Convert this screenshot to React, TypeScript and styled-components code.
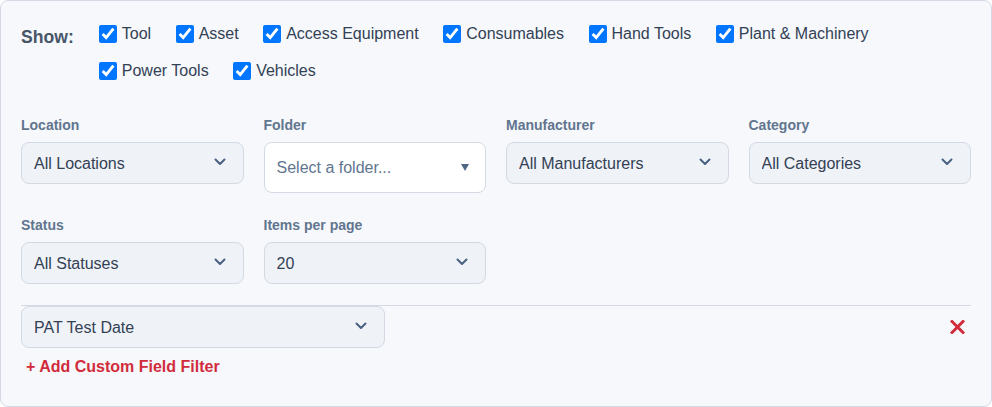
import { FC } from 'react';
import styled, { createGlobalStyle } from 'styled-components';

const slate700 = '#334155';
const slate600 = '#475569';
const slate500 = '#61758f';
const border = '#d3dae3';
const red = '#d12c3c';

const GlobalStyle = createGlobalStyle`
	html, body {
		margin: 0;
		padding: 0;
		background: #ffffff;
	}
	body {
		font-family: 'Liberation Sans', Arial, sans-serif;
	}
	* {
		box-sizing: border-box;
	}
`;

const Panel = styled.div`
	width: 992px;
	height: 407px;
	padding: 20px;
	background: #f6f8fb;
	border: 1px solid ${border};
	border-radius: 8px;
`;

const ShowRow = styled.div`
	display: flex;
	align-items: flex-start;
	gap: 25px;
	margin-bottom: 31px;
`;

const ShowLabel = styled.span`
	font-size: 17.6px;
	font-weight: 700;
	line-height: 26px;
	margin-top: 3px;
	color: ${slate600};
	white-space: nowrap;
`;

const TypeList = styled.div`
	flex: 1;
	display: flex;
	flex-wrap: wrap;
	column-gap: 24.5px;
	row-gap: 11px;
`;

const TypeOption = styled.label`
	display: flex;
	align-items: center;
	gap: 5px;
	height: 26px;
	font-size: 16px;
	color: ${slate700};
	cursor: pointer;
	white-space: nowrap;

	input {
		width: 18px;
		height: 18px;
		margin: 0;
	}
`;

const FilterGrid = styled.div`
	display: grid;
	grid-template-columns: repeat(4, 1fr);
	column-gap: 20px;
	row-gap: 22px;
	align-items: start;
`;

const Field = styled.div`
	display: flex;
	flex-direction: column;
`;

const FieldLabel = styled.label`
	font-size: 14px;
	font-weight: 700;
	line-height: 20px;
	margin-bottom: 7px;
	color: ${slate500};
`;

const SelectWrap = styled.div<{ $width?: number }>`
	position: relative;
	width: ${({ $width }) => ($width ? `${$width}px` : '100%')};
`;

const Select = styled.select`
	appearance: none;
	width: 100%;
	height: 42px;
	padding: 0 40px 0 12px;
	font-family: inherit;
	font-size: 16px;
	color: ${slate700};
	background: #eff2f7;
	border: 1px solid ${border};
	border-radius: 8px;
	outline: none;
`;

const Chevron = styled.svg`
	position: absolute;
	right: 18px;
	top: 50%;
	margin-top: -5px;
	pointer-events: none;
`;

const FolderPicker = styled.button`
	display: flex;
	align-items: center;
	justify-content: space-between;
	width: 100%;
	height: 51px;
	padding: 0 16px 0 12px;
	font-family: inherit;
	font-size: 16px;
	color: ${slate500};
	background: #ffffff;
	border: 1px solid ${border};
	border-radius: 8px;
	text-align: left;
	cursor: pointer;
`;

const Caret = styled.span`
	width: 0;
	height: 0;
	border-left: 4px solid transparent;
	border-right: 4px solid transparent;
	border-top: 7px solid #4f6785;
`;

const Divider = styled.hr`
	margin: 21px 0 0;
	border: none;
	border-top: 1px solid ${border};
`;

const CustomRow = styled.div`
	display: flex;
	align-items: center;
	justify-content: space-between;
`;

const RemoveButton = styled.button`
	display: flex;
	align-items: center;
	justify-content: center;
	width: 28px;
	height: 28px;
	padding: 0;
	background: none;
	border: none;
	cursor: pointer;
`;

const AddButton = styled.button`
	margin-top: 5px;
	padding: 4px 5px;
	font-family: inherit;
	font-size: 16px;
	font-weight: 700;
	line-height: 20px;
	color: ${red};
	background: none;
	border: none;
	cursor: pointer;
`;

const ChevronIcon: FC = () => (
	<Chevron width="12" height="8" viewBox="0 0 12 8" fill="none">
		<path d="M1.5 1.5 6 6l4.5-4.5" stroke="#4a6282" strokeWidth="2" strokeLinecap="round" strokeLinejoin="round" />
	</Chevron>
);

type DropdownProps = { options: string[]; width?: number };

const Dropdown: FC<DropdownProps> = ({ options, width }) => (
	<SelectWrap $width={width}>
		<Select defaultValue={options[0]}>
			{options.map((o) => (
				<option key={o}>{o}</option>
			))}
		</Select>
		<ChevronIcon />
	</SelectWrap>
);

const assetTypes = [
	'Tool',
	'Asset',
	'Access Equipment',
	'Consumables',
	'Hand Tools',
	'Plant & Machinery',
	'Power Tools',
	'Vehicles',
];

export default function App() {
	return (
		<>
			<GlobalStyle />
			<Panel>
				<ShowRow>
					<ShowLabel>Show:</ShowLabel>
					<TypeList>
						{assetTypes.map((t) => (
							<TypeOption key={t}>
								<input type="checkbox" defaultChecked />
								{t}
							</TypeOption>
						))}
					</TypeList>
				</ShowRow>

				<FilterGrid>
					<Field>
						<FieldLabel>Location</FieldLabel>
						<Dropdown options={['All Locations']} />
					</Field>
					<Field>
						<FieldLabel>Folder</FieldLabel>
						<FolderPicker type="button">
							Select a folder...
							<Caret />
						</FolderPicker>
					</Field>
					<Field>
						<FieldLabel>Manufacturer</FieldLabel>
						<Dropdown options={['All Manufacturers']} />
					</Field>
					<Field>
						<FieldLabel>Category</FieldLabel>
						<Dropdown options={['All Categories']} />
					</Field>
					<Field>
						<FieldLabel>Status</FieldLabel>
						<Dropdown options={['All Statuses']} />
					</Field>
					<Field>
						<FieldLabel>Items per page</FieldLabel>
						<Dropdown options={['20', '50', '100']} />
					</Field>
				</FilterGrid>

				<Divider />
				<CustomRow>
					<Dropdown options={['PAT Test Date']} width={364} />
					<RemoveButton type="button" aria-label="Remove filter">
						<svg width="15" height="14" viewBox="0 0 15 14">
							<path d="M2 1.5 13 12.5M13 1.5 2 12.5" stroke={red} strokeWidth="3" strokeLinecap="square" />
						</svg>
					</RemoveButton>
				</CustomRow>
				<AddButton type="button">+ Add Custom Field Filter</AddButton>
			</Panel>
		</>
	);
}
